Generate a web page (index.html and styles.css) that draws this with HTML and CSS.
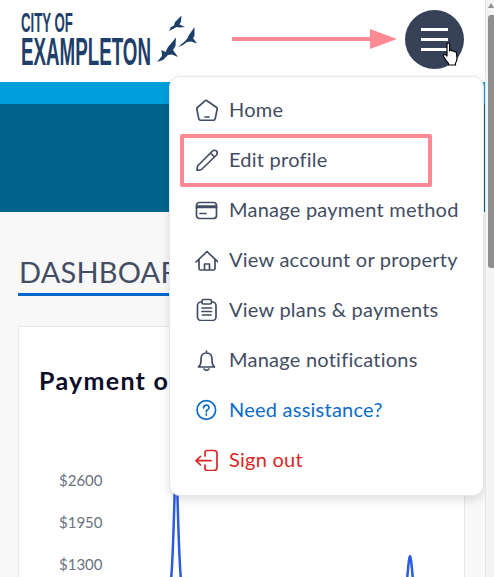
FILE: index.html
```html
<!DOCTYPE html>
<html lang="en">
<head>
<meta charset="utf-8">
<title>City of Exampleton</title>
<link rel="stylesheet" href="styles.css">
</head>
<body>
<div class="page">
  <header class="topbar">
    <div class="logo">
      <div class="logo-text">
        <span class="logo-small">CITY OF</span>
        <span class="logo-big">EXAMPLETON</span>
      </div>
      <svg class="birds" viewBox="155 13 43 51" width="43" height="51">
        <path d="M169 31 L171 27 L174 25.500 L175 22 L181.500 15.500 L181 21.500 L179.500 24.500 L185 27 L180 27.500 L176.500 27 L173 29 Z"/>
        <path d="M178 47 L184 42 L187 39 L189 35 L194.500 27 L194.500 36 L193 38 L197 43.500 L191 41.500 L187 42 L183 45 Z"/>
        <path d="M157 62 L162 56 L161.500 50 L165.500 52 L168 47 L176 37.500 L175.500 46 L173 50 L178 57 L172 54.500 L168 55 L163 60 Z"/>
      </svg>
    </div>
    <button class="menu-btn" aria-label="Menu">
      <span class="bar"></span><span class="bar"></span><span class="bar"></span>
    </button>
  </header>
  <div class="band-light"></div>
  <div class="band-dark"></div>
  <main class="content">
    <h1 class="title">DASHBOARD</h1>
    <section class="card">
      <h2 class="card-title">Payment o</h2>
      <div class="chart">
        <div class="y-axis">
          <span>$2600</span>
          <span>$1950</span>
          <span>$1300</span>
        </div>
        <svg class="plot" viewBox="0 0 340 118" width="340" height="118">
          <path d="M66 120 C69 90 70 0 71 -10 C72 0 73 90 76 120 M302 120 C303 110 304 96 305 96 C306 96 307 110 308 120"/>
        </svg>
      </div>
    </section>
  </main>

  <nav class="dropdown">
    <a class="item">
      <svg class="icon" viewBox="0 0 24 24"><path d="M13 3.700 L22.600 10.500 Q23.400 11.100 23.200 12 L21.300 21.300 Q20.900 23.300 19 23.300 H7 Q5.100 23.300 4.700 21.300 L2.800 12 Q2.600 11.100 3.400 10.500 L11 3.800 Q12 3 13 3.700Z M11 20 H15"/></svg>
      <span>Home</span>
    </a>
    <a class="item">
      <svg class="icon" viewBox="0 0 24 24"><path d="M3 23.500 L3.500 19 L18.500 4 Q20.500 2.500 22.500 4 Q24 6 22.500 8 L7.500 22.500 Z M16.500 6 L20.500 10"/></svg>
      <span>Edit profile</span>
    </a>
    <a class="item">
      <svg class="icon" viewBox="0 0 24 24"><rect x="2.500" y="5.500" width="20" height="16" rx="3"/><path d="M2.500 10.500 H22.500 M2.500 9 H22.500 M6 16.500 H12"/></svg>
      <span>Manage payment method</span>
    </a>
    <a class="item">
      <svg class="icon" viewBox="0 0 24 24"><path d="M2 15 L13 4.500 L24 15 M5 12.500 V21.500 Q5 23 6.500 23 H19.500 Q21 23 21 21.500 V12.500 M10.500 23 V17 H15.500 V23"/></svg>
      <span>View account or property</span>
    </a>
    <a class="item">
      <svg class="icon" viewBox="0 0 24 24"><rect x="3.500" y="5" width="18.500" height="18.500" rx="3.500"/><rect class="clip" x="8" y="2.500" width="9.500" height="4.500" rx="1.500"/><path d="M8 11 H17.500 M8 14.500 H17.500 M8.500 18 H17"/></svg>
      <span>View plans &amp; payments</span>
    </a>
    <a class="item">
      <svg class="icon" viewBox="0 0 24 24"><path d="M4.500 20 Q7 18 7 14 V12 Q7 6 12.500 6 Q18 6 18 12 V14 Q18 18 20.500 20 Z M12.500 4 V6 M10 22 Q12.500 24.500 15 22"/></svg>
      <span>Manage notifications</span>
    </a>
    <a class="item help">
      <svg class="icon" viewBox="0 0 24 24"><circle cx="12.300" cy="13" r="9.300"/><path d="M9.500 10.800 Q9.800 8.200 12.300 8.200 Q15 8.200 15 10.500 Q15 12 13.500 12.800 Q12.300 13.400 12.300 14.800 M12.300 17 V18"/></svg>
      <span>Need assistance?</span>
    </a>
    <a class="item signout">
      <svg class="icon" viewBox="0 0 24 24"><path d="M11 9 V5.500 Q11 3.500 13 3.500 H20 Q23 3.500 23 6.500 V20.500 Q23 23.500 20 23.500 H13 Q11 23.500 11 21.500 V18 M2 13.700 H17 M6.500 9.500 L2 13.700 L6.500 18"/></svg>
      <span>Sign out</span>
    </a>
  </nav>

  <div class="highlight"></div>
  <div class="arrow"><span class="arrow-line"></span><span class="arrow-head"></span></div>
  <svg class="cursor" viewBox="0 0 18 24" width="18" height="24">
    <path d="M5 2.500 Q5 1 6.300 1 Q7.600 1 7.600 2.500 V9 L8 8.300 Q9.500 7.500 10 9 Q11.500 8.200 12.200 9.800 Q13.800 9.200 14.400 10.800 L15 16 Q15 19 13.500 21 V23 H6.500 V21.500 Q3.500 18 1.500 14.500 Q1 13 2.300 12.500 Q3.500 12.300 5 14 Z"/>
  </svg>
  <div class="scrollbar"><span class="scroll-up"></span><span class="scroll-thumb"></span></div>
</div>
</body>
</html>
```
FILE: styles.css
```css
* { box-sizing: border-box; }
html, body { margin: 0; padding: 0; }
body { font-family: "Lato", "Noto Sans", sans-serif; background: #f8f8f8; }
.page { position: relative; width: 494px; height: 577px; overflow: hidden; background: #f8f8f8; }

.topbar { height: 82px; background: #fff; display: flex; align-items: flex-start; justify-content: space-between; padding: 10px 30px 0 21px; }
.logo { display: flex; align-items: flex-start; }
.logo-text { display: flex; flex-direction: column; width: 134px; color: #1f3f6b; font-family: "Liberation Sans", sans-serif; font-weight: 700; }
.logo-small { font-size: 27px; line-height: 27px; transform: scaleX(.49); transform-origin: left; white-space: nowrap; }
.logo-big { font-size: 38px; line-height: 31px; transform: scaleX(.494); transform-origin: left; white-space: nowrap; }
.birds { fill: #1f3f6b; margin-top: 3px; flex: none; }
.menu-btn { width: 59px; height: 59px; border: 0; border-radius: 50%; background: #374259; display: flex; flex-direction: column; align-items: center; justify-content: center; gap: 7.500px; padding: 0; }
.bar { width: 27px; height: 2.500px; background: #fff; }

.band-light { height: 22px; background: #009fdb; }
.band-dark { height: 108px; background: #00648c; }

.content { padding: 42px 29px 0 18px; }
.title { margin: 0; padding: 0 0 4px 1px; font-size: 29px; line-height: 35px; font-weight: 400; color: #434d63; border-bottom: 3px solid #0066cc; letter-spacing: .2px; }
.card { margin-top: 30px; background: #fff; border: 1px solid #e5e7eb; padding: 38px 0 0 20px; height: 300px; }
.card-title { margin: 0; font-size: 25px; line-height: 30px; font-weight: 700; color: #0b0b2a; white-space: nowrap; letter-spacing: 1.300px; }
.chart { display: flex; margin-top: 75px; margin-left: 20px; }
.y-axis { display: flex; flex-direction: column; width: 46px; gap: 22px; color: #6b7280; font-size: 15px; line-height: 20px; flex: none; }
.plot { margin-top: -10px; overflow: visible; flex: none; fill: none; stroke: #2a5be0; stroke-width: 2.500; }

.dropdown { position: absolute; left: 169px; top: 76px; width: 315px; height: 420px; padding: 7px 0 0 24px; background: #fff; border: 1px solid #e5e7eb; border-radius: 11px; box-shadow: 0 4px 10px rgba(0,0,0,.12); }
.item { display: flex; align-items: center; gap: 11px; height: 50px; font-size: 20px; letter-spacing: .24px; color: #434d63; white-space: nowrap; }
.icon { width: 24px; height: 24px; flex: none; fill: none; stroke: currentColor; stroke-width: 1.700; stroke-linecap: round; stroke-linejoin: round; }
.clip { fill: #fff; }
.help { color: #0b6bcb; }
.signout { color: #dc2626; }

.highlight { position: absolute; left: 180px; top: 134px; width: 252px; height: 53px; border: 4.500px solid #ff8a94; border-radius: 2px; }
.arrow { position: absolute; left: 232px; top: 28px; display: flex; align-items: center; height: 21px; }
.arrow-line { width: 140px; height: 4px; background: #ff8a94; }
.arrow-head { width: 0; height: 0; margin-left: -2px; border-left: 27px solid #ff8a94; border-top: 10.500px solid transparent; border-bottom: 10.500px solid transparent; }
.cursor { position: absolute; left: 442px; top: 42px; fill: #fff; stroke: #000; stroke-width: 1.200; stroke-linejoin: round; }

.scrollbar { position: absolute; right: 0; top: 0; width: 9px; height: 577px; background: #f4f4f4; border-left: 1px solid #e4e4e4; display: flex; flex-direction: column; align-items: flex-end; }
.scroll-up { width: 0; height: 0; margin: 3px 0 0; border-left: 3.500px solid transparent; border-right: 3.500px solid transparent; border-bottom: 5px solid #8f8f8f; }
.scroll-thumb { width: 6px; height: 253px; margin-top: 7px; background: #8f8f8f; border-radius: 3px 0 0 3px; }
```
